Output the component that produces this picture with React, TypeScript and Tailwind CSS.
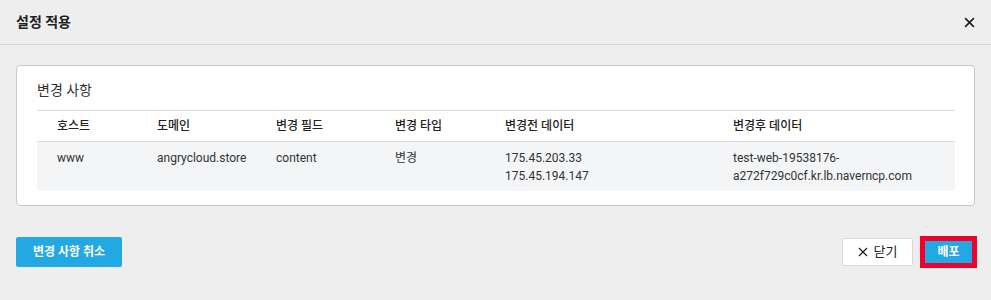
import React from "react";

const font = { fontFamily: 'Roboto, "Noto Sans CJK KR", sans-serif' };

const rows = [
  {
    host: "www",
    domain: "angrycloud.store",
    field: "content",
    type: "변경",
    before: ["175.45.203.33", "175.45.194.147"],
    after: ["test-web-19538176-", "a272f729c0cf.kr.lb.naverncp.com"],
  },
];

export default function App() {
  return (
    <div className="w-[991px] h-[300px] bg-[#eeeeee] text-[#333] flex flex-col" style={font}>
      <div className="h-[45px] border-b border-[#d6d6d6] flex items-center justify-between pl-4 pr-[16px] shrink-0">
        <span className="text-[14px] font-bold text-[#222]">설정 적용</span>
        <svg width="11" height="11" viewBox="0 0 10 10">
          <path d="M1 1L9 9M9 1L1 9" stroke="#222" strokeWidth="1.5" />
        </svg>
      </div>
      <div className="px-4 pt-5">
        <div className="bg-white border border-[#c8c8c8] rounded-[4px] pt-[14px] pb-[14px] pl-5 pr-[19px]">
          <div className="text-[14px] text-[#333] leading-5 mb-[10px]">변경 사항</div>
          <div className="border-t border-[#dcdcdc]">
            <div className="grid grid-cols-[100px_119px_119px_110px_228px_1fr] h-[31px] items-center pl-5 text-[12px] font-medium text-[#222] border-b border-[#dcdcdc]">
              <div>호스트</div>
              <div>도메인</div>
              <div>변경 필드</div>
              <div>변경 타입</div>
              <div>변경전 데이터</div>
              <div>변경후 데이터</div>
            </div>
            {rows.map((r) => (
              <div
                key={r.host}
                className="grid grid-cols-[100px_119px_119px_110px_228px_1fr] h-[49px] pt-[7px] pl-5 text-[12px] text-[#333] leading-[18px] bg-[#f4f5f7]"
              >
                <div>{r.host}</div>
                <div>{r.domain}</div>
                <div>{r.field}</div>
                <div>{r.type}</div>
                <div>
                  {r.before.map((b) => (
                    <div key={b}>{b}</div>
                  ))}
                </div>
                <div>
                  {r.after.map((b) => (
                    <div key={b}>{b}</div>
                  ))}
                </div>
              </div>
            ))}
          </div>
        </div>
      </div>
      <div className="flex items-center justify-between pl-4 pr-[14px] mt-[30px]">
        <button className="h-[30px] w-[106px] bg-[#22a8e2] text-white text-[12px] font-bold rounded-[2px]">
          변경 사항 취소
        </button>
        <div className="flex items-center gap-[7px]">
          <button className="h-[28px] w-[71px] bg-white border border-[#d8d8d8] rounded-[2px] flex items-center justify-center gap-[6px] text-[13px] text-[#222]">
            <svg width="10" height="10" viewBox="0 0 10 10">
              <path d="M1 1L9 9M9 1L1 9" stroke="#222" strokeWidth="1.3" />
            </svg>
            닫기
          </button>
          <div className="border-[5px] border-[#f0002a] p-0">
            <button className="h-[22px] w-[47px] bg-[#22a8e2] text-white text-[12px] font-bold block">
              배포
            </button>
          </div>
        </div>
      </div>
    </div>
  );
}
